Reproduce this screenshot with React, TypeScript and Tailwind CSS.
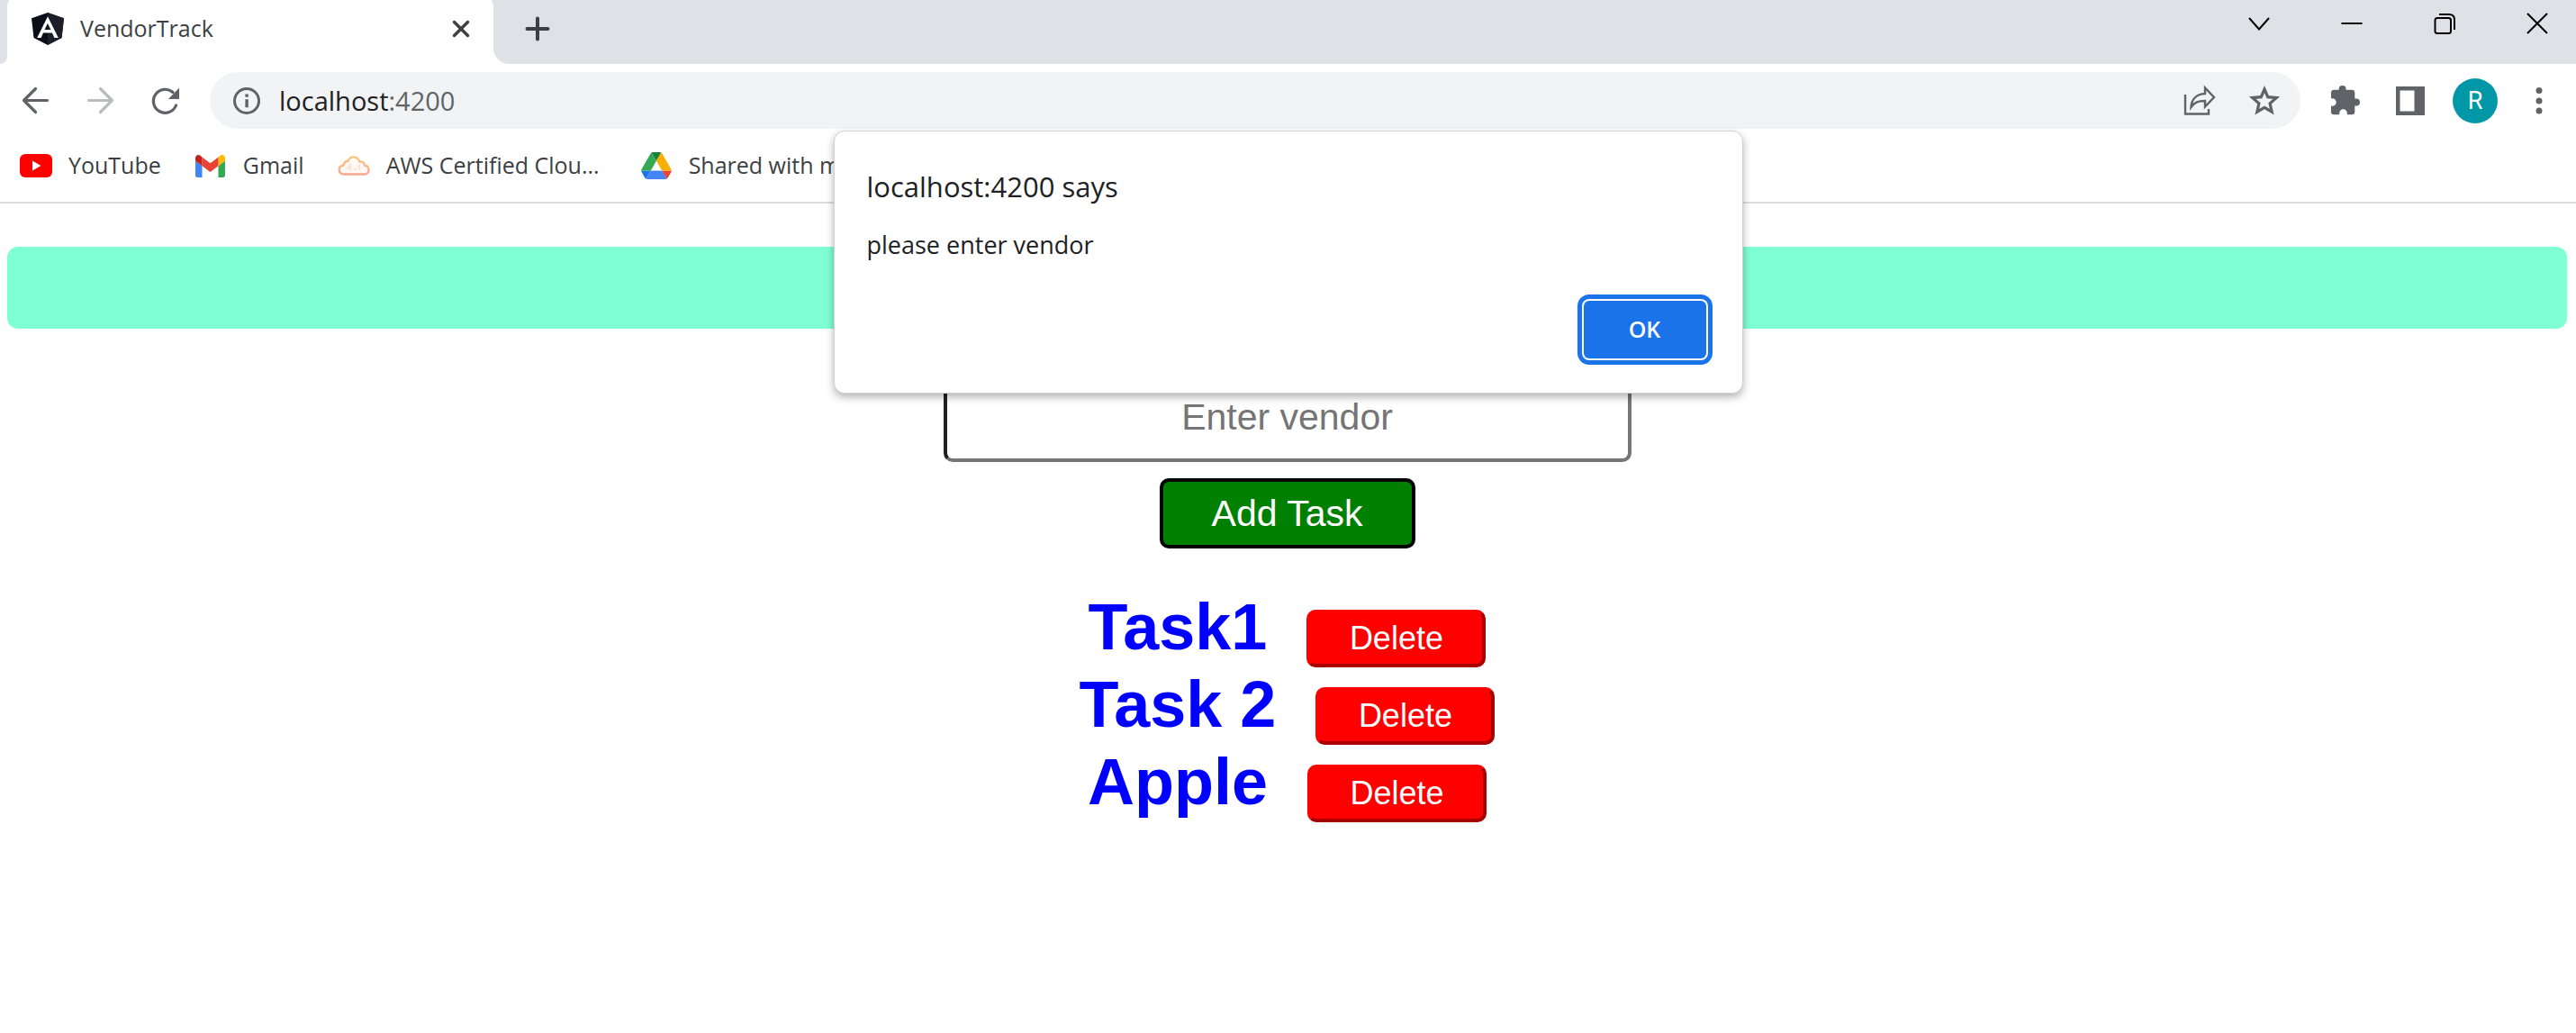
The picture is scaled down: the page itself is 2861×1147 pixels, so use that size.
import React from "react";

const tasks = ["Task1", "Task 2", "Apple"];

function AngularLogo() {
  return (
    <svg width="36" height="36" viewBox="0 0 36 36" aria-hidden="true">
      <path d="M18 0 36 6.200 33.500 28 18 36 2.500 28 0 6.200Z" fill="#0b0e17" />
      <path d="M18 0 36 6.200 33.500 28 18 36Z" fill="#1c1f29" />
      <path d="M18 4.200 6.200 28h4.400l2.400-5.600h10l2.400 5.600h4.400Zm0 7.800 3.500 7h-7Z" fill="#fff" />
    </svg>
  );
}

function YouTubeLogo() {
  return (
    <svg width="36" height="26" viewBox="0 0 36 26" aria-hidden="true">
      <rect width="36" height="26" rx="6" fill="#f00" />
      <path d="M14 7.500v11l9.500-5.500Z" fill="#fff" />
    </svg>
  );
}

function GmailLogo() {
  return (
    <svg width="33" height="25" viewBox="52 42 88 66" aria-hidden="true">
      <path fill="#4285f4" d="M58 108h14V74L52 59v43c0 3.320 2.690 6 6 6" />
      <path fill="#34a853" d="M120 108h14c3.320 0 6-2.690 6-6V59l-20 15" />
      <path fill="#fbbc04" d="M120 48v26l20-15v-8c0-7.420-8.470-11.650-14.400-7.200" />
      <path fill="#ea4335" d="M72 74V48l24 18 24-18v26L96 92" />
      <path fill="#c5221f" d="M52 51v8l20 15V48l-5.600-4.200c-5.940-4.450-14.400-.22-14.400 7.200" />
    </svg>
  );
}

function CloudLogo() {
  return (
    <svg width="36" height="24" viewBox="0 0 36 24" fill="none" aria-hidden="true">
      <defs>
        <linearGradient id="cloud" x1="0" y1="0" x2="0" y2="1">
          <stop offset="0" stopColor="#fbc67c" />
          <stop offset="1" stopColor="#fba893" />
        </linearGradient>
      </defs>
      <path d="M7 21.500h23c6 0 6-9 0-10C29.500 8 27 7 24.500 7.500 22 1 14 .5 11.500 7 8 6.500 7 9 6.500 11.500c-6.500 1-6.500 10 .5 10Z" fill="#fff8f3" stroke="url(#cloud)" strokeWidth="2.400" />
      <path d="M10 16l4-5v6M18 16h3M24 11v5" stroke="#fde3d6" strokeWidth="2" />
    </svg>
  );
}

function DriveLogo() {
  return (
    <svg width="34" height="30" viewBox="0 0 87.300 78" aria-hidden="true">
      <path d="m6.600 66.850 3.850 6.650c.8 1.400 1.950 2.500 3.300 3.300L27.500 53H0c0 1.550.4 3.100 1.200 4.500z" fill="#1a73e8" />
      <path d="M43.650 25 29.900 1.200c-1.350.8-2.500 1.900-3.300 3.300L1.200 48.500A9 9 0 0 0 0 53h27.500z" fill="#34a853" />
      <path d="M73.550 76.800c1.350-.8 2.500-1.900 3.300-3.300l1.600-2.750L86.100 57.500c.8-1.400 1.200-2.950 1.200-4.500H59.800l5.850 11.500z" fill="#ea4335" />
      <path d="M43.650 25 57.400 1.200C56.050.4 54.500 0 52.900 0H34.400c-1.600 0-3.150.45-4.500 1.200z" fill="#188038" />
      <path d="M59.800 53H27.500L13.750 76.800c1.350.8 2.900 1.200 4.500 1.200h50.800c1.600 0 3.150-.45 4.500-1.200z" fill="#4285f4" />
      <path d="M73.400 26.500 60.700 4.500c-.8-1.400-1.950-2.500-3.300-3.300L43.650 25 59.800 53h27.450c0-1.550-.4-3.100-1.200-4.500z" fill="#fbae05" />
    </svg>
  );
}

const bookmarks = [
  { label: "YouTube", icon: <YouTubeLogo />, width: "" },
  { label: "Gmail", icon: <GmailLogo />, width: "" },
  { label: "AWS Certified Clou...", icon: <CloudLogo />, width: "pr-2" },
  { label: "Shared with me", icon: <DriveLogo />, width: "" },
];

function TabStrip() {
  return (
    <div className="flex h-[71px] bg-white">
      <div className="w-2 rounded-br-lg bg-[#dee1e6]" />
      <div className="w-[540px] overflow-hidden bg-[linear-gradient(#dee1e6_16px,#fff_16px)]">
        <div className="-mt-2 flex h-20 items-center rounded-t-2xl bg-white pt-2 pr-[25px] pb-2 pl-[27px]">
          <AngularLogo />
          <span className="ml-[18px] flex-1 pb-[3px] text-[25px] leading-8 text-[#3c4043]">VendorTrack</span>
          <button aria-label="Close tab" className="flex size-[22px] items-center justify-center">
            <svg width="22" height="22" viewBox="0 0 22 22" stroke="#3c4043" strokeWidth="3.400" strokeLinecap="round">
              <path d="M3.500 3.500l15 15M18.500 3.500l-15 15" />
            </svg>
          </button>
        </div>
      </div>
      <div className="flex flex-1 justify-between rounded-bl-[18px] bg-[#dee1e6] pl-[35px]">
        <button aria-label="New tab" className="mt-[18px] size-7">
          <svg width="28" height="28" viewBox="0 0 28 28" stroke="#3c4043" strokeWidth="4" strokeLinecap="round">
            <path d="M14 2.500v23M2.500 14h23" />
          </svg>
        </button>
        <div className="mt-[14px] flex h-6 gap-[79px] pr-[31px]">
          <button aria-label="Search tabs" className="size-6">
            <svg width="24" height="24" viewBox="0 0 24 24" fill="none" stroke="#000" strokeWidth="2">
              <path d="M1 6l11 12.500L23 6" />
            </svg>
          </button>
          <button aria-label="Minimize" className="size-6">
            <svg width="24" height="24" viewBox="0 0 24 24" stroke="#000" strokeWidth="2">
              <path d="M.5 12h23" />
            </svg>
          </button>
          <button aria-label="Restore" className="size-6">
            <svg width="24" height="24" viewBox="0 0 24 24" fill="none" stroke="#000" strokeWidth="2">
              <rect x="1.500" y="6" width="17.500" height="17" rx="2.500" />
              <path d="M6 2h11q6 0 6 6v11" />
            </svg>
          </button>
          <button aria-label="Close window" className="size-6">
            <svg width="24" height="24" viewBox="0 0 24 24" stroke="#000" strokeWidth="2">
              <path d="M1 1l22 22M23 1L1 23" />
            </svg>
          </button>
        </div>
      </div>
    </div>
  );
}

function Toolbar() {
  return (
    <div className="flex h-[81px] items-center pr-[23px] pl-[21px]">
      <nav aria-label="History" className="flex gap-9 pr-8">
        <button aria-label="Back" className="size-9">
          <svg width="36" height="36" viewBox="0 0 36 36" fill="none" stroke="#5f6368" strokeWidth="3.200" strokeLinecap="round" strokeLinejoin="round">
            <path d="M31.500 17.500H5.500M18.500 4.500l-13 13 13 13" />
          </svg>
        </button>
        <button aria-label="Forward" className="size-9">
          <svg width="36" height="36" viewBox="0 0 36 36" fill="none" stroke="#babcbe" strokeWidth="3.200" strokeLinecap="round" strokeLinejoin="round">
            <path d="M5.500 17.500h26M18.500 4.500l13 13-13 13" />
          </svg>
        </button>
        <button aria-label="Reload" className="size-9">
          <svg width="36" height="36" viewBox="0 0 36 36" fill="none" stroke="#5f6368" strokeWidth="3.200" strokeLinecap="round">
            <path d="M30.500 23A13 13 0 1 1 27 8.500" />
            <path d="M34 3.500v12.500H22Z" fill="#5f6368" stroke="none" />
          </svg>
        </button>
      </nav>
      <div className="flex h-[63px] flex-1 items-center rounded-full bg-[#f1f3f4] pr-[22px] pl-[25px]">
        <svg width="32" height="32" viewBox="0 0 32 32" aria-hidden="true">
          <circle cx="16" cy="16" r="13.500" fill="none" stroke="#5f6368" strokeWidth="3" />
          <path d="M14.400 8.500h3.400v3.300h-3.400zM14.400 14.300h3.400v9h-3.400z" fill="#5f6368" />
        </svg>
        <a href="#" className="ml-5 flex-1 text-[29px] leading-10 text-[#5f6368]">
          <span className="text-[#202124]">localhost</span>:4200
        </a>
        <div className="flex gap-9">
          <button aria-label="Share" className="size-9">
            <svg width="36" height="36" viewBox="0 0 36 36" fill="none" stroke="#5f6368" strokeWidth="2.400">
              <path d="M2 11v21.500h26V27" />
              <path d="M24 3.500v6.500C14 10.500 9 16.500 8.500 25c4-5.500 8-7 15.500-7v6.500L34 14Z" />
            </svg>
          </button>
          <button aria-label="Bookmark this tab" className="size-9">
            <svg width="36" height="36" viewBox="0 0 36 36" fill="none" stroke="#5f6368" strokeWidth="3.200">
              <path d="M18 5l3.700 8.700 9.600.9-7.200 6.300 2.100 9.300L18 25.400 9.800 30.200l2.100-9.300-7.200-6.300 9.600-.9Z" />
            </svg>
          </button>
        </div>
      </div>
      <div className="flex items-center pl-8">
        <button aria-label="Extensions" className="size-9">
          <svg width="36" height="36" viewBox="0 0 36 36" fill="#5f6368">
            <path d="M30 15.500h-1.700V9a3.200 3.200 0 0 0-3.200-3.200h-6.500V5a4 4 0 0 0-8 0v.8H5.200A3.200 3.200 0 0 0 2 9v6.200h1.400a4.300 4.300 0 0 1 0 8.600H2V30a3.200 3.200 0 0 0 3.200 3.200h6V31.500a4.300 4.300 0 0 1 8.600 0v1.700h5.300a3.200 3.200 0 0 0 3.200-3.200v-6.500H30a4 4 0 0 0 0-8Z" />
          </svg>
        </button>
        <button aria-label="Side panel" className="ml-9 size-9">
          <svg width="36" height="36" viewBox="0 0 36 36">
            <path fillRule="evenodd" fill="#5f6368" d="M2 2h32v32H2zM6.500 6.500v23h16v-23z" />
          </svg>
        </button>
        <button aria-label="Profile" className="ml-[29px] size-[50px] rounded-full bg-[#0097a7] text-center font-[Roboto,sans-serif] text-[27px] leading-[50px] text-white">
          R
        </button>
        <button aria-label="Menu" className="ml-[28px] size-9">
          <svg width="36" height="36" viewBox="0 0 36 36" fill="#5f6368">
            <circle cx="18" cy="6.500" r="3.500" />
            <circle cx="18" cy="18" r="3.500" />
            <circle cx="18" cy="29" r="3.500" />
          </svg>
        </button>
      </div>
    </div>
  );
}

function BookmarkBar() {
  return (
    <nav aria-label="Bookmarks" className="flex h-[74px] gap-[37px] border-b-2 border-[#dcdcdc] pt-3 pl-[22px]">
      {bookmarks.map((b) => (
        <a key={b.label} href="#" className="flex h-10 items-center text-[25px] whitespace-nowrap text-[#3c4043]">
          <span className="flex w-9 justify-center">{b.icon}</span>
          <span className={`ml-[18px] ${b.width}`}>{b.label}</span>
        </a>
      ))}
    </nav>
  );
}

function AlertDialog() {
  return (
    <div
      role="alertdialog"
      aria-labelledby="alert-title"
      aria-describedby="alert-text"
      className="absolute top-[145px] left-1/2 flex w-[1010px] -translate-x-1/2 flex-col rounded-xl border border-[#d0d2d3] bg-white pt-[38px] pr-10 pb-[38px] pl-9 text-[#202124] shadow-[0_4px_10px_rgba(0,0,0,0.3)]"
    >
      <h2 id="alert-title" className="text-[31px] leading-[46px]">localhost:4200 says</h2>
      <p id="alert-text" className="mt-6 text-[27px] leading-9">please enter vendor</p>
      <button className="mt-11 h-16 w-[136px] self-end rounded-md bg-[#1a73e8] text-[25px] font-semibold text-white ring-[5px] ring-[#1a73e8] ring-offset-2 ring-offset-white">
        OK
      </button>
    </div>
  );
}

export default function App() {
  return (
    <div className="relative min-h-screen bg-white font-['Open_Sans',sans-serif]">
      <header>
        <TabStrip />
        <Toolbar />
        <BookmarkBar />
      </header>
      <main className="flex flex-col items-center pt-12 pr-[10px] pl-2 font-['Liberation_Sans',Arial,sans-serif]">
        <div className="h-[91px] w-full rounded-xl bg-[#7fffd4]" />
        <input
          type="text"
          aria-label="Vendor"
          placeholder="Enter vendor"
          className="mt-12 h-[100px] w-[764px] rounded-[10px] border-4 border-[#767676] border-t-[#222] border-l-[#222] text-center text-[41px] placeholder:text-[#757575]"
        />
        <button className="mt-[18px] h-[78px] w-[284px] rounded-[10px] border-4 border-black bg-[#008000] text-[41px] leading-none text-white">
          Add Task
        </button>
        <ul className="mt-11">
          {tasks.map((task) => (
            <li key={task} className="flex h-[86px] items-baseline justify-center gap-11">
              <span className="text-[72px] leading-[86px] font-bold text-[#0000ff]">{task}</span>
              <button className="h-16 w-[199px] rounded-[10px] border-4 border-[#ff0000] border-r-[#a80000] border-b-[#a80000] bg-[#ff0000] text-[36px] leading-none text-white">
                Delete
              </button>
            </li>
          ))}
        </ul>
      </main>
      <AlertDialog />
    </div>
  );
}
